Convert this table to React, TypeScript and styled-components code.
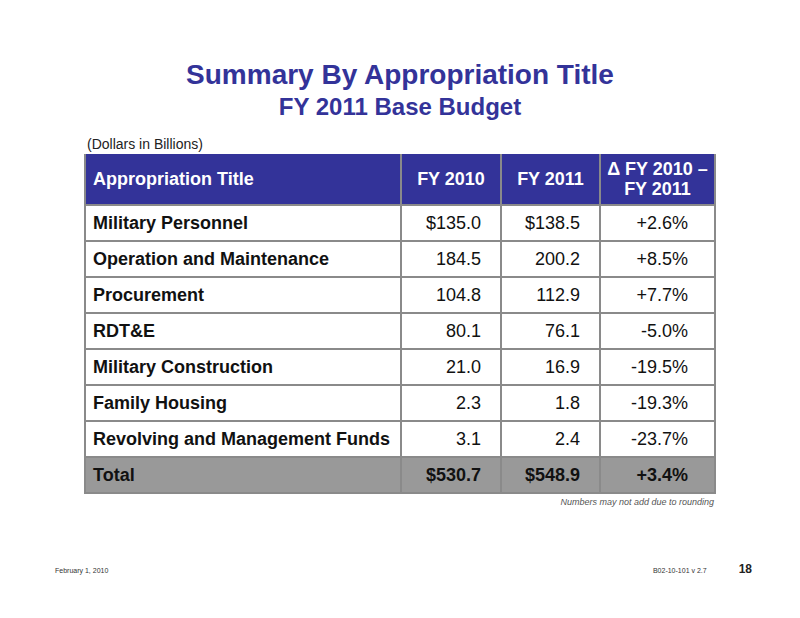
import React from 'react';
import styled, { createGlobalStyle } from 'styled-components';

const GlobalStyle = createGlobalStyle`
  html, body {
    margin: 0;
    padding: 0;
    background: #ffffff;
  }
  body {
    font-family: 'Liberation Sans', Arial, sans-serif;
  }
`;

const Slide = styled.div`
  width: 800px;
  height: 618px;
  display: flex;
  flex-direction: column;
  align-items: center;
  box-sizing: border-box;
  padding-top: 58px;
  background: #ffffff;
`;

const Title = styled.h1`
  margin: 0;
  font-size: 28px;
  line-height: 34px;
  font-weight: bold;
  color: #333399;
`;

const Subtitle = styled.h2`
  margin: 1px 0 0;
  font-size: 24px;
  line-height: 28px;
  font-weight: bold;
  color: #333399;
`;

const Content = styled.div`
  width: 630px;
  margin-top: 15px;
  margin-left: -2px;
  display: flex;
  flex-direction: column;
`;

const Units = styled.div`
  font-size: 14px;
  line-height: 16px;
  color: #222222;
  padding-left: 3px;
  margin-bottom: 2px;
`;

const Table = styled.table`
  width: 630px;
  border-collapse: collapse;
  table-layout: fixed;
`;

const HeadCell = styled.th<{ $align?: 'left' | 'center' }>`
  background: #333399;
  color: #ffffff;
  font-size: 18px;
  line-height: 20px;
  font-weight: bold;
  height: 51px;
  padding: 0 ${({ $align }) => ($align === 'left' ? 7 : 2)}px;
  box-sizing: border-box;
  white-space: nowrap;
  text-align: ${({ $align }) => $align ?? 'center'};
  border: 2px solid #8a8a8a;
  border-top: none;
  vertical-align: middle;
`;

const Row = styled.tr<{ $total?: boolean }>`
  background: ${({ $total }) => ($total ? '#999999' : '#ffffff')};
  height: 36px;
`;

const NameCell = styled.td`
  font-size: 18px;
  font-weight: bold;
  color: #111111;
  padding: 0 7px;
  border: 2px solid #8a8a8a;
  text-align: left;
  white-space: nowrap;
`;

const NumCell = styled.td<{ $total?: boolean; $pad?: number }>`
  font-size: 18px;
  font-weight: ${({ $total }) => ($total ? 'bold' : 'normal')};
  color: #111111;
  padding: 0 ${({ $pad }) => $pad ?? 19}px 0 0;
  text-align: right;
  border: 2px solid #8a8a8a;
  border-left-color: ${({ $total }) => ($total ? '#ececec' : '#8a8a8a')};
`;

const Note = styled.div`
  align-self: flex-end;
  font-size: 9px;
  font-style: italic;
  color: #555555;
  margin-top: 3px;
`;

const Footer = styled.div`
  align-self: stretch;
  margin-top: auto;
  padding: 0 48px 42px 55px;
  display: flex;
  align-items: baseline;
`;

const FooterText = styled.span`
  font-size: 7px;
  color: #333333;
`;

const DocId = styled(FooterText)`
  margin-left: auto;
  margin-right: 32px;
`;

const PageNum = styled.span`
  font-size: 12px;
  font-weight: bold;
  color: #222222;
`;

const rows = [
  { name: 'Military Personnel', a: '$135.0', b: '$138.5', d: '+2.6%' },
  { name: 'Operation and Maintenance', a: '184.5', b: '200.2', d: '+8.5%' },
  { name: 'Procurement', a: '104.8', b: '112.9', d: '+7.7%' },
  { name: 'RDT&E', a: '80.1', b: '76.1', d: '-5.0%' },
  { name: 'Military Construction', a: '21.0', b: '16.9', d: '-19.5%' },
  { name: 'Family Housing', a: '2.3', b: '1.8', d: '-19.3%' },
  { name: 'Revolving and Management Funds', a: '3.1', b: '2.4', d: '-23.7%' },
];

export default function App() {
  return (
    <>
      <GlobalStyle />
      <Slide>
        <Title>Summary By Appropriation Title</Title>
        <Subtitle>FY 2011 Base Budget</Subtitle>
        <Content>
          <Units>(Dollars in Billions)</Units>
          <Table>
            <colgroup>
              <col style={{ width: 316 }} />
              <col style={{ width: 100 }} />
              <col style={{ width: 99 }} />
              <col style={{ width: 115 }} />
            </colgroup>
            <thead>
              <tr>
                <HeadCell $align="left">Appropriation Title</HeadCell>
                <HeadCell>FY 2010</HeadCell>
                <HeadCell>FY 2011</HeadCell>
                <HeadCell>
                  Δ FY 2010 –<br />FY 2011
                </HeadCell>
              </tr>
            </thead>
            <tbody>
              {rows.map((r) => (
                <Row key={r.name}>
                  <NameCell>{r.name}</NameCell>
                  <NumCell>{r.a}</NumCell>
                  <NumCell>{r.b}</NumCell>
                  <NumCell $pad={26}>{r.d}</NumCell>
                </Row>
              ))}
              <Row $total>
                <NameCell>Total</NameCell>
                <NumCell $total>$530.7</NumCell>
                <NumCell $total>$548.9</NumCell>
                <NumCell $total $pad={26}>+3.4%</NumCell>
              </Row>
            </tbody>
          </Table>
          <Note>Numbers may not add due to rounding</Note>
        </Content>
        <Footer>
          <FooterText>February 1, 2010</FooterText>
          <DocId>B02-10-101 v 2.7</DocId>
          <PageNum>18</PageNum>
        </Footer>
      </Slide>
    </>
  );
}
